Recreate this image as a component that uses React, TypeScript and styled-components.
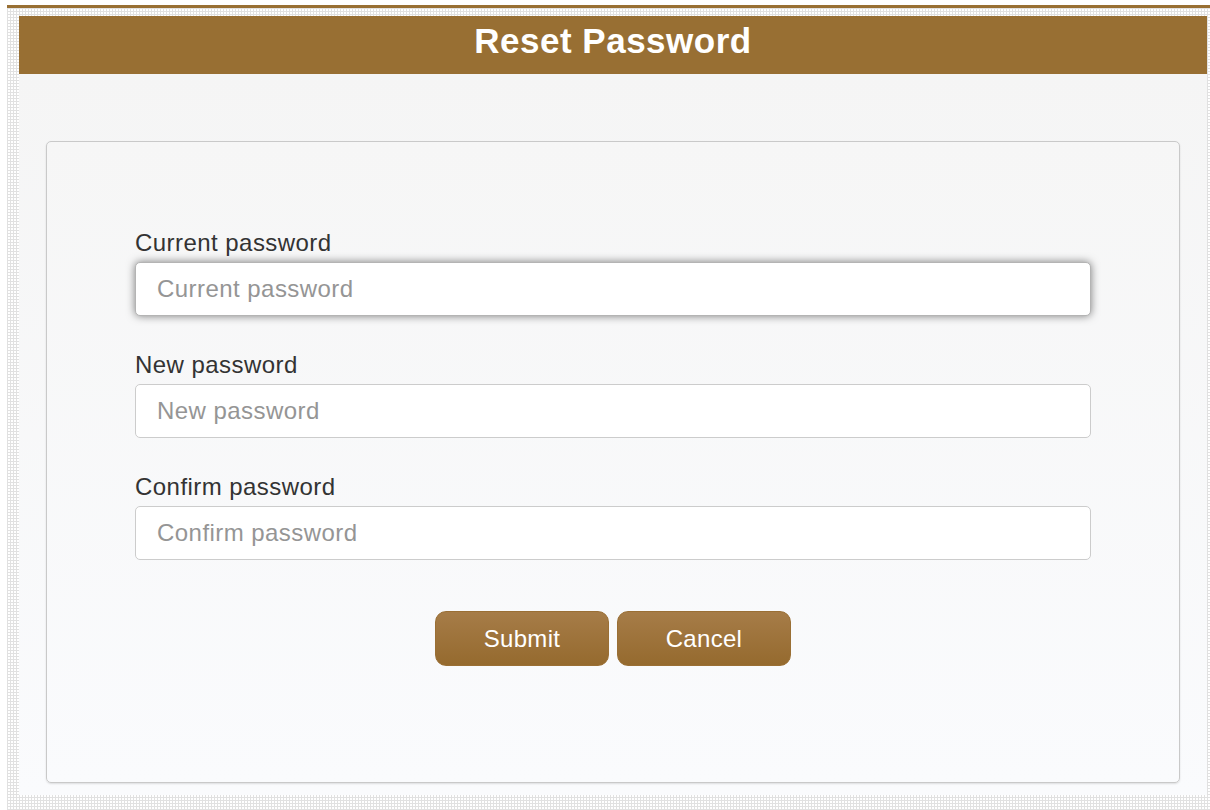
import { FC } from 'react';
import styled, { createGlobalStyle } from 'styled-components';

const GlobalStyle = createGlobalStyle`
    html,
    body {
        margin: 0;
        padding: 0;
        background: #ffffff;
        font-family: 'Liberation Sans', Arial, sans-serif;
    }
    * {
        box-sizing: border-box;
    }
`;

const Page = styled.div`
    width: 1210px;
    height: 810px;
    overflow: hidden;
    padding: 5px 0 0 7px;
    background: #ffffff;
`;

const Frame = styled.div`
    height: 805px;
    border-top: 3px solid #986f33;
    padding: 8px 3px 0 12px;
    background-color: #ffffff;
    background-image: linear-gradient(90deg, #e1e1e1 1px, transparent 1px),
        linear-gradient(#e1e1e1 1px, transparent 1px);
    background-size: 3px 3px;
`;

const Panel = styled.section`
    display: flex;
    flex-direction: column;
`;

const Header = styled.h1`
    margin: 0;
    height: 58px;
    padding-bottom: 10px;
    background: #986f33;
    color: #ffffff;
    text-align: center;
    font-size: 35px;
    letter-spacing: 0.5px;
    line-height: 50px;
    font-weight: 700;
`;

const Body = styled.div`
    padding: 67px 27px 12px;
    background: linear-gradient(#f5f5f5, #fafbfd);
`;

const Card = styled.form`
    display: flex;
    flex-direction: column;
    padding: 87px 88px 116px;
    border: 1px solid #c9c9c9;
    border-radius: 5px;
    background: linear-gradient(#f6f6f6, #fafbfd);
    box-shadow: 0 1px 2px rgba(0, 0, 0, 0.12);
`;

const Field = styled.div`
    display: flex;
    flex-direction: column;
    margin-bottom: 35px;
`;

const Label = styled.label`
    display: block;
    margin-bottom: 5px;
    font-size: 24px;
    letter-spacing: 0.45px;
    line-height: 28px;
    color: #333333;
`;

const Input = styled.input`
    height: 54px;
    width: 100%;
    padding: 0 21px;
    border: 1px solid #cccccc;
    border-radius: 5px;
    background: #ffffff;
    font-family: 'Liberation Sans', Arial, sans-serif;
    font-size: 24px;
    letter-spacing: 0.45px;
    color: #333333;
    caret-color: #333333;
    outline: none;

    &::placeholder {
        color: #959595;
    }

    &:focus {
        border-color: #b4b4b4;
        box-shadow: 0 0 8px rgba(0, 0, 0, 0.5);
    }
`;

const Actions = styled.div`
    display: flex;
    justify-content: center;
    gap: 8px;
    margin-top: 16px;
`;

const Button = styled.button`
    width: 174px;
    height: 55px;
    border: 1px solid #9a6f35;
    border-radius: 11px;
    background: linear-gradient(#a67c48, #956a2e);
    color: #ffffff;
    font-family: 'Liberation Sans', Arial, sans-serif;
    font-size: 24px;
    letter-spacing: 0.3px;
    cursor: pointer;
`;

const fields = [
    { id: 'current', label: 'Current password' },
    { id: 'new', label: 'New password' },
    { id: 'confirm', label: 'Confirm password' },
];

const App: FC = () => {
    return (
        <>
            <GlobalStyle />
            <Page>
                <Frame>
                    <Panel>
                        <Header>Reset Password</Header>
                        <Body>
                            <Card onSubmit={(e) => e.preventDefault()}>
                                {fields.map((f, i) => (
                                    <Field key={f.id}>
                                        <Label htmlFor={f.id}>{f.label}</Label>
                                        <Input id={f.id} type="password" placeholder={f.label} autoFocus={i === 0} />
                                    </Field>
                                ))}
                                <Actions>
                                    <Button type="submit">Submit</Button>
                                    <Button type="button">Cancel</Button>
                                </Actions>
                            </Card>
                        </Body>
                    </Panel>
                </Frame>
            </Page>
        </>
    );
};

export default App;
